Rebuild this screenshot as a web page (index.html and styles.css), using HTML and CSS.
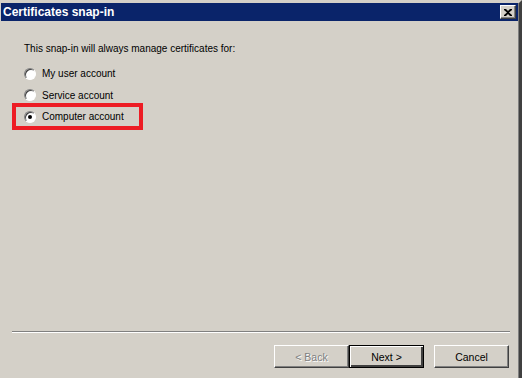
FILE: index.html
```html
<!DOCTYPE html>
<html lang="en">
<head>
  <meta charset="UTF-8">
  <title>Certificates snap-in</title>
  <link rel="stylesheet" href="styles.css">
</head>
<body>

  <div class="window">
    <div class="title-bar">
      <span class="title-text">Certificates snap-in</span>
      <div class="close-btn">
        <svg width="8" height="7" viewBox="0 0 8 7"><path d="M0 0h2l2 2 2-2h2v1L5 3.5 8 6v1H6L4 5 2 7H0V6l3-2.5L0 1z" fill="#000"/></svg>
      </div>
    </div>

    <div class="content">
      <p class="intro">This snap-in will always manage certificates for:</p>
      <label class="option"><input type="radio" name="acc"> My user account</label>
      <label class="option"><input type="radio" name="acc"> Service account</label>
      <label class="option highlighted"><input type="radio" name="acc" checked> Computer account</label>
    </div>

    <div class="footer">
      <div class="separator"></div>
      <div class="buttons">
        <button class="btn" disabled>&lt; Back</button>
        <button class="btn default">Next &gt;</button>
        <button class="btn cancel">Cancel</button>
      </div>
    </div>
  </div>

</body>
</html>
```

FILE: styles.css
```css
*{
  margin: 0;
  padding: 0;
  box-sizing: border-box;
}
body{
  background-color: #d4d0c8;
  font-family: "Liberation Sans", Arial, sans-serif;
  font-size: 10px;
  color: #000;
}

.window{
  width: 522px;
  height: 378px;
  display: flex;
  flex-direction: column;
  background-color: #d4d0c8;
  border-top: 3px solid #d4d0c8;
  border-left: 1px solid #d4d0c8;
  border-right: 3px solid #404040;
  box-shadow: inset -1px 0 0 #808080, inset 0 1px 0 #ffffff;
  padding-right: 1px;
}

.title-bar{
  height: 18px;
  background-color: #0a246a;
  display: flex;
  align-items: center;
  justify-content: space-between;
  padding-left: 2px;
  padding-right: 2px;
}
.title-text{
  color: #fff;
  font-weight: bold;
  font-size: 12px;
}
.close-btn{
  width: 16px;
  height: 14px;
  background-color: #d4d0c8;
  display: grid;
  place-content: center;
  border-top: 1px solid #fff;
  border-left: 1px solid #fff;
  border-right: 1px solid #404040;
  border-bottom: 1px solid #404040;
  box-shadow: inset -1px -1px 0 #808080;
}
.close-btn svg{
  display: block;
}

.content{
  flex: 1;
  padding: 20px 0 0 23px;
}
.intro{
  height: 16px;
  line-height: 16px;
  margin-bottom: 6px;
}

.option{
  display: flex;
  align-items: center;
  height: 21.5px;
  gap: 6px;
  position: relative;
  width: fit-content;
}
.option input{
  appearance: none;
  width: 12px;
  height: 12px;
  border-radius: 50%;
  background-color: #fff;
  border: 1px solid #808080;
  border-right-color: #fff;
  border-bottom-color: #fff;
  box-shadow: inset 1px 1px 0 #404040;
  display: grid;
  place-content: center;
  margin: 0;
}
.option input:checked::after{
  content: "";
  width: 4px;
  height: 4px;
  border-radius: 50%;
  background-color: #000;
}

.highlighted::before{
  content: "";
  box-sizing: border-box;
  position: absolute;
  left: -12px;
  top: -3px;
  width: 131px;
  height: 27px;
  border: 4px solid #ed1c24;
}

.separator{
  margin: 0 8px 0 11px;
  height: 2px;
  border-top: 1px solid #808080;
  border-bottom: 1px solid #fff;
}

.buttons{
  display: flex;
  justify-content: flex-end;
  padding: 12px 9px 10px 0;
}
.btn{
  width: 75px;
  height: 23px;
  font-family: inherit;
  font-size: 10.5px;
  background-color: #d4d0c8;
  color: #000;
  border-top: 1px solid #fff;
  border-left: 1px solid #fff;
  border-right: 1px solid #404040;
  border-bottom: 1px solid #404040;
  box-shadow: inset -1px -1px 0 #808080;
}
.btn:disabled{
  color: #808080;
  text-shadow: 1px 1px 0 #fff;
}
.btn.default{
  border: 1px solid #000;
  box-shadow: inset 1px 1px 0 #fff, inset -2px -2px 0 #404040, inset -1px -1px 0 #808080;
}
.btn.cancel{
  margin-left: 10px;
}
```
